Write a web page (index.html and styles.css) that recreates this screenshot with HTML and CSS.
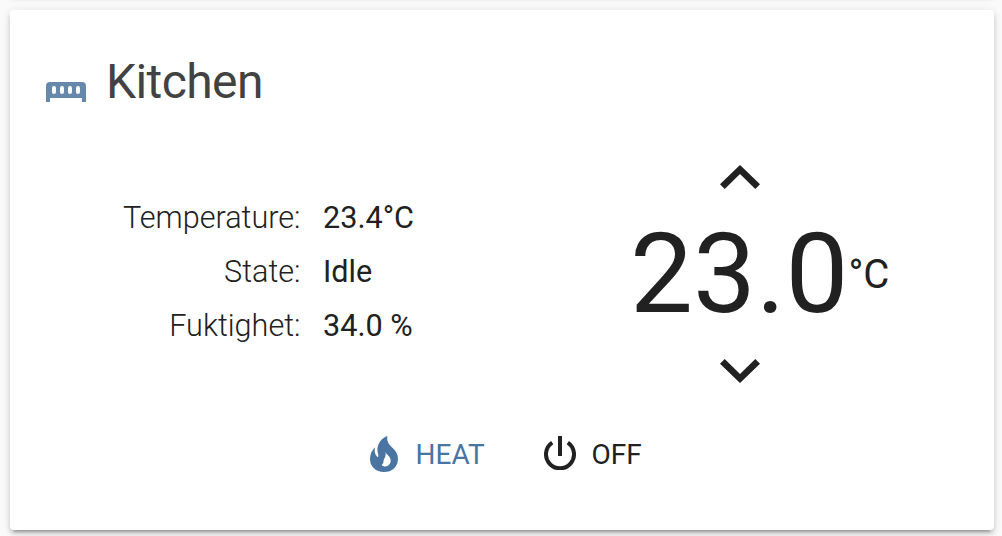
FILE: index.html
```
<!DOCTYPE html>
<html lang="en">
<head>
<meta charset="utf-8">
<title>Kitchen</title>
<link rel="stylesheet" href="styles.css">
</head>
<body>
<div class="previous-card"></div>
<main class="card">
  <header class="header">
    <svg class="radiator" viewBox="0 0 40 20"><path fill-rule="evenodd" d="M4 0H36Q40 0 40 4V20H36V16H4V20H0V4Q0 0 4 0ZM8 4Q6 4 6 6V10Q6 12 8 12T10 10V6Q10 4 8 4ZM16 4Q14 4 14 6V10Q14 12 16 12T18 10V6Q18 4 16 4ZM24 4Q22 4 22 6V10Q22 12 24 12T26 10V6Q26 4 24 4ZM32 4Q30 4 30 6V10Q30 12 32 12T34 10V6Q34 4 32 4Z"/></svg>
    <h1 class="title">Kitchen</h1>
  </header>
  <section class="body">
    <dl class="sensors">
      <dt>Temperature:</dt><dd>23.4°C</dd>
      <dt>State:</dt><dd>Idle</dd>
      <dt>Fuktighet:</dt><dd>34.0 %</dd>
    </dl>
    <div class="control">
      <svg class="chevron" viewBox="0 0 40 24"><path d="M4.7 24L0 19.3 20 0 40 19.3 35.3 24 20 9Z"/></svg>
      <div class="setpoint"><span class="value">23.0</span><span class="unit">°C</span></div>
      <svg class="chevron" viewBox="0 0 40 24"><path d="M4.7 0L0 4.7 20 24 40 4.7 35.3 0 20 15Z"/></svg>
    </div>
  </section>
  <footer class="modes">
    <div class="mode active">
      <svg class="fire" viewBox="0 0 84 108"><path fill-rule="evenodd" d="M52 0C50 14 55 23 64 32C76 43 84 53 84 68C84 92 66 108 42 108C18 108 0 92 0 69C0 54 6 43 15 34C13 44 14 54 20 61Q24 65 25 61C26 56 22 48 22 39C24 20 36 6 52 0ZM46 49C49 58 45 64 42 70C39 76 43 81 35 87C39 92 48 93 54 89C65 81 64 68 56 60C52 56 49 54 46 49Z"/></svg>
      <span>HEAT</span>
    </div>
    <div class="mode">
      <svg class="power" viewBox="0 0 32 34"><path class="ring" d="M8.2 6.7A14 14 0 1 0 23.8 6.7"/><path d="M14 0H18V20H14Z"/></svg>
      <span>OFF</span>
    </div>
  </footer>
</main>
</body>
</html>
```
FILE: styles.css
```
* { box-sizing: border-box; }
body {
  margin: 0;
  height: 536px;
  overflow: hidden;
  background: #fafafa;
  color: #212121;
  font-family: Roboto, sans-serif;
}
svg { display: block; flex: none; fill: currentColor; }
.previous-card, .card {
  background: #fff;
  border-radius: 4px;
  box-shadow: 0 4px 4px rgba(0,0,0,.14), 0 2px 10px rgba(0,0,0,.12), 0 6px 2px -4px rgba(0,0,0,.2);
}
.previous-card { height: 10px; margin: -16px 8px 0 10px; }
.card { width: 984px; height: 520px; margin: 16px 0 0 10px; }
.header { display: flex; height: 136px; padding: 44px 0 0 36px; }
.radiator { width: 40px; height: 20px; margin: 28px 20px 0 0; color: #6688aa; }
.title {
  margin: 0;
  font-size: 48px;
  font-weight: 400;
  line-height: 56px;
  letter-spacing: -.6px;
  color: #424242;
}
.body { display: flex; height: 264px; }
.sensors {
  display: grid;
  grid-template-columns: 290.5px 1fr;
  grid-auto-rows: 54px;
  column-gap: 22.5px;
  width: 492px;
  margin: 0;
  padding-top: 45px;
  font-size: 30.6px;
  line-height: 54px;
}
.sensors dt { text-align: right; font-weight: 300; }
.sensors dd { margin: 0; }
.control { flex: 1; padding-top: 19px; }
.chevron { width: 40px; height: 24px; margin-left: 218px; }
.setpoint { display: flex; height: 169.7px; padding: 19px 0 0 128px; }
.value { font-size: 112px; line-height: 132px; }
.unit { font-size: 40px; line-height: 48px; margin: 43px 0 0 0; }
.modes { display: flex; padding: 22px 0 0 360px; font-size: 28px; line-height: 46px; }
.mode { display: flex; }
.active { width: 174px; color: #4a74a2; }
.fire { width: 28px; height: 36px; margin: 4px 17.5px 0 0; }
.power { width: 32px; height: 34px; margin: 4px 15.5px 0 0; }
.ring { fill: none; stroke: currentColor; stroke-width: 4; }
```
